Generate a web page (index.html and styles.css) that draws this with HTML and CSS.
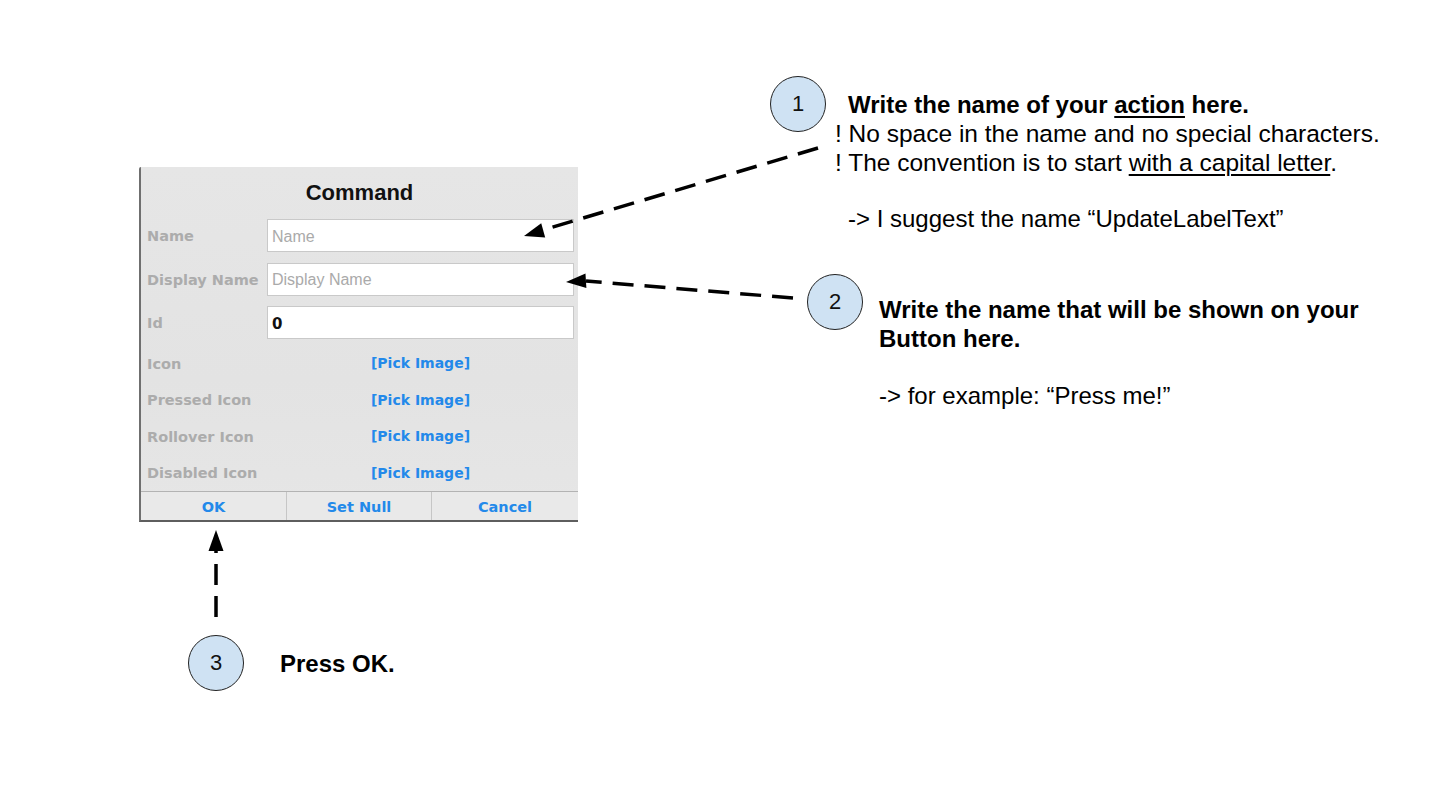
FILE: index.html
```html
<!DOCTYPE html>
<html lang="en">
<head>
<meta charset="utf-8">
<title>Command</title>
<link rel="stylesheet" href="styles.css">
</head>
<body>
<div class="slide">
  <div class="dialog">
    <div class="dlg-title">Command</div>
    <div class="dlg-inputs">
      <label class="lbl">Name</label>
      <div class="inp placeholder">Name</div>
      <label class="lbl">Display Name</label>
      <div class="inp placeholder">Display Name</div>
      <label class="lbl">Id</label>
      <div class="inp value">0</div>
    </div>
    <div class="dlg-picks">
      <div class="lbl">Icon</div><div class="pick">[Pick Image]</div>
      <div class="lbl">Pressed Icon</div><div class="pick">[Pick Image]</div>
      <div class="lbl">Rollover Icon</div><div class="pick">[Pick Image]</div>
      <div class="lbl">Disabled Icon</div><div class="pick">[Pick Image]</div>
    </div>
    <div class="dlg-buttons">
      <div class="btn">OK</div>
      <div class="btn">Set Null</div>
      <div class="btn">Cancel</div>
    </div>
  </div>

  <svg class="arrows" width="1434" height="790" viewBox="0 0 1434 790">
    <g stroke="#000" stroke-width="3.5" stroke-dasharray="21 11" fill="none">
      <line x1="818" y1="148" x2="543" y2="230"/>
      <line x1="793" y1="298" x2="586" y2="281"/>
      <line x1="216" y1="617" x2="216" y2="550"/>
    </g>
    <g fill="#000">
      <polygon points="524,236 545.2,237.6 541.2,223.2"/>
      <polygon points="566,282 586.4,288 585.5,273.4"/>
      <polygon points="216,530 208.5,551 223.5,551"/>
    </g>
  </svg>

  <div class="step step1">
    <div class="num">1</div>
    <div class="note">
      <p class="b ind">Write the name of your <u>action</u> here.</p>
      <p class="wide">! No space in the name and no special characters.</p>
      <p class="wide">! The convention is to start <u>with a capital letter</u>.</p>
      <p>&nbsp;</p>
      <p class="ind">-&gt; I suggest the name “UpdateLabelText”</p>
    </div>
  </div>

  <div class="step step2">
    <div class="num">2</div>
    <div class="note">
      <p class="b">Write the name that will be shown on your</p>
      <p class="b">Button here.</p>
      <p>&nbsp;</p>
      <p>-&gt; for example: “Press me!”</p>
    </div>
  </div>

  <div class="step step3">
    <div class="num">3</div>
    <div class="note">
      <p class="b">Press OK.</p>
    </div>
  </div>
</div>
</body>
</html>
```

FILE: styles.css
```css
html, body {
  margin: 0;
  padding: 0;
  background: #ffffff;
}

.slide {
  position: relative;
  width: 1434px;
  height: 790px;
  overflow: hidden;
  background: #ffffff;
  font-family: "Liberation Sans", Arial, sans-serif;
  color: #000;
}

/* ---------- dialog screenshot ---------- */
.dialog {
  position: absolute;
  left: 139px;
  top: 167px;
  width: 439px;
  height: 355px;
  box-sizing: border-box;
  border-left: 2px solid #6f6f6f;
  border-bottom: 2px solid #5e5e5e;
  border-top-left-radius: 2px;
  background: linear-gradient(180deg, #e6e6e6 0%, #e3e3e3 60%, #e6e6e6 100%);
  display: flex;
  flex-direction: column;
  font-family: "DejaVu Sans", Verdana, sans-serif;
}

.dlg-title {
  height: 52px;
  display: flex;
  align-items: center;
  justify-content: center;
  font-family: "Liberation Sans", Arial, sans-serif;
  font-weight: bold;
  font-size: 22px;
  color: #111;
}

.dlg-inputs {
  display: grid;
  grid-template-columns: 120px 1fr;
  grid-auto-rows: 33px;
  row-gap: 10.5px;
  padding: 0 4px 0 6px;
  align-items: center;
}

.lbl {
  font-weight: bold;
  font-size: 14.5px;
  color: #acacac;
  padding-top: 1px;
}

.inp {
  height: 33px;
  box-sizing: border-box;
  background: #ffffff;
  border: 1px solid #c9c9c9;
  display: flex;
  align-items: center;
  padding-left: 4px;
  padding-top: 2px;
}

.placeholder {
  font-family: "Liberation Sans", Arial, sans-serif;
  font-size: 16px;
  color: #aaaaaa;
}

.value {
  font-weight: bold;
  font-size: 15px;
  color: #111;
}

.dlg-picks {
  margin-top: 6px;
  display: grid;
  grid-template-columns: 120px 1fr;
  grid-auto-rows: 36.5px;
  padding: 0 4px 0 6px;
  align-items: center;
}

.pick {
  text-align: center;
  font-weight: bold;
  font-size: 14px;
  color: #2389ea;
}

.dlg-buttons {
  flex: 1;
  display: grid;
  grid-template-columns: 146px 145px 1fr;
  border-top: 1px solid #b3b3b3;
  background: #e9e9e9;
}

.btn {
  display: flex;
  align-items: center;
  justify-content: center;
  font-weight: bold;
  font-size: 14.5px;
  color: #2389ea;
  border-right: 1px solid #c6c6c6;
  padding-top: 1px;
}

.btn:last-child {
  border-right: none;
}

/* ---------- annotations ---------- */
.arrows {
  position: absolute;
  left: 0;
  top: 0;
  pointer-events: none;
}

.step {
  position: absolute;
  display: flex;
  align-items: flex-start;
}

.num {
  width: 56px;
  height: 56px;
  box-sizing: border-box;
  border: 1.3px solid #222;
  border-radius: 50%;
  background: #cfe2f3;
  display: flex;
  align-items: center;
  justify-content: center;
  font-size: 22px;
  color: #111;
  flex: none;
}

.note p {
  margin: 0;
  font-size: 24px;
  line-height: 29px;
  white-space: nowrap;
}

.note p.wide {
  font-size: 24.5px;
}

.note .b {
  font-weight: bold;
}

.note u {
  text-decoration-thickness: 1.5px;
  text-underline-offset: 3px;
}

.step1 {
  left: 770px;
  top: 76px;
}

.step1 .note {
  margin-left: 9px;
  margin-top: 13.5px;
}

.step1 .ind {
  padding-left: 13px;
}

.step1 .ind:last-child {
  margin-top: -2px;
}

.step2 {
  left: 807px;
  top: 274px;
}

.step2 .note {
  margin-left: 16px;
  margin-top: 20.5px;
}

.step2 .note p:last-child {
  margin-top: -1px;
}

.step3 {
  left: 188px;
  top: 635px;
}

.step3 .note {
  margin-left: 36px;
  margin-top: 13.5px;
}
```
